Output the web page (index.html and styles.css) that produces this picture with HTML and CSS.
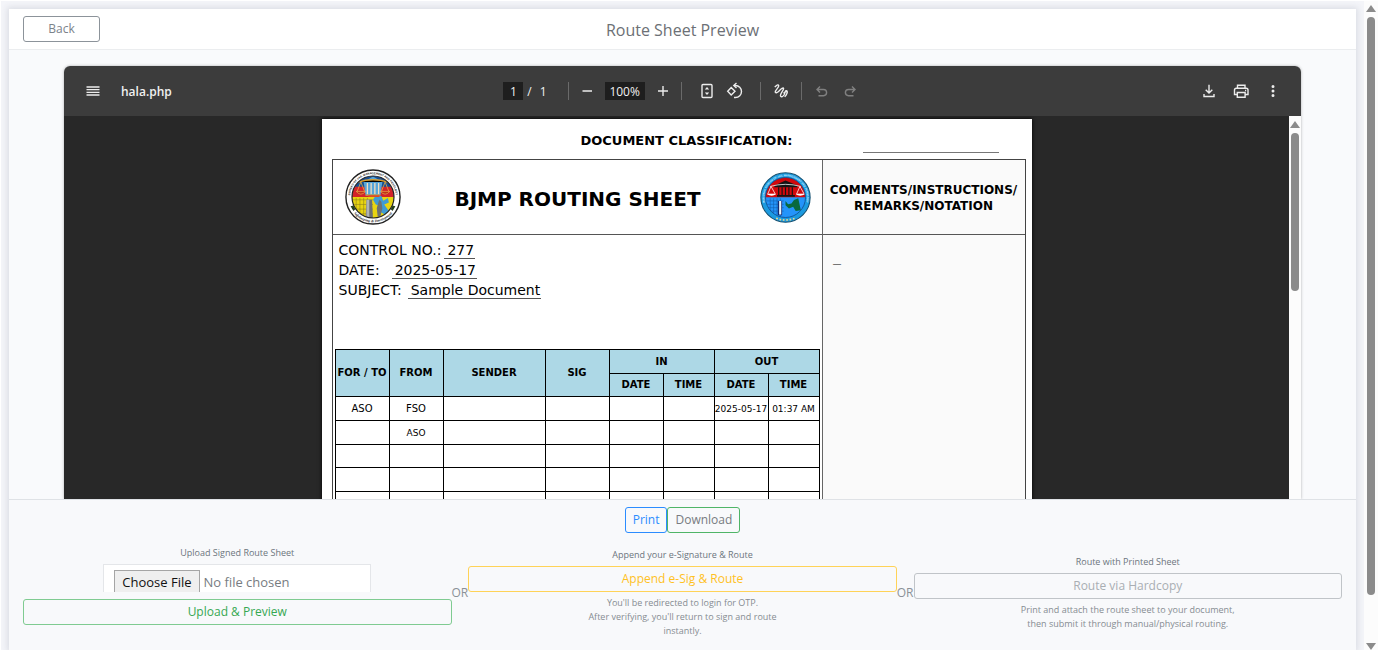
FILE: index.html
```html
<!DOCTYPE html>
<html lang="en">
<head>
<meta charset="utf-8">
<title>Route Sheet Preview</title>
<link rel="stylesheet" href="styles.css">
</head>
<body>
<div class="page">
  <main class="card">
    <header class="card-header">
      <button class="btn btn-secondary btn-back" type="button">Back</button>
      <h1 class="card-title">Route Sheet Preview</h1>
    </header>

    <section class="viewer" aria-label="Document">
      <div class="pdf">
        <div class="toolbar">
          <div class="toolbar-start">
            <button class="tool" type="button" aria-label="Menu"><svg viewBox="0 0 20 20"><path d="M3.500 6h13M3.500 8.700h13M3.500 11.300h13M3.500 14h13" stroke-width="1.300"/></svg></button>
            <span class="file-name">hala.php</span>
          </div>
          <div class="toolbar-center">
            <div class="group group-page">
              <input class="field field-page" type="text" value="1" aria-label="Page">
              <span>/</span><span class="page-count">1</span>
            </div>
            <div class="group group-zoom">
              <button class="tool" type="button" aria-label="Zoom out"><svg viewBox="0 0 20 20"><path d="M5.500 10h9.500"/></svg></button>
              <input class="field field-zoom" type="text" value="100%" aria-label="Zoom level">
              <button class="tool" type="button" aria-label="Zoom in"><svg viewBox="0 0 20 20"><path d="M5 10h10M10 5v10"/></svg></button>
            </div>
            <div class="group group-fit">
              <button class="tool" type="button" aria-label="Fit to page"><svg viewBox="0 0 20 20"><rect x="5" y="3.500" width="10" height="13" rx="1"/><path class="solid" d="M7.800 8.500h4.400L10 6zM7.800 11.500h4.400L10 14z"/></svg></button>
              <button class="tool" type="button" aria-label="Rotate"><svg viewBox="0 0 20 20"><path d="M6.200 6.500 10 10.300 6.200 14 2.700 10.300zM9.300 4.500h1.200a6 6 0 0 1 0 12H9"/><path d="m11.500 2-2.700 2.500L11.500 7"/></svg></button>
            </div>
            <div class="group group-draw">
              <button class="tool" type="button" aria-label="Draw"><svg viewBox="0 0 20 20"><path d="M3.800 6.200C5.300 4 7.300 3.200 7.700 4.600 8.200 6.400 4 9.200 4.300 11c.3 1.500 2.200.6 4-1.300 1.900-2 4-3.400 4.300-2.200.3 1.600-3.800 5.200-3.200 7.400.4 1.500 2.400 1 3.600-.9 1-1.700.9-3.800 2-4.300 1-.4 1.700.8 1 2.600-.5 1.300-1.600 2.800-2.300 3.600M12.500 12.300c1.200-1.700 2.400-1.900 4-1.900"/></svg></button>
            </div>
            <div class="group group-history">
              <button class="tool" type="button" aria-label="Undo" disabled><svg viewBox="0 0 20 20"><path d="M8 5.500 5 8.500l3 3M5 8.500h6.500a3.100 3.100 0 0 1 0 6.200H6.500"/></svg></button>
              <button class="tool" type="button" aria-label="Redo" disabled><svg viewBox="0 0 20 20"><path d="m12 5.500 3 3-3 3M15 8.500H8.500a3.100 3.100 0 0 0 0 6.200h5"/></svg></button>
            </div>
          </div>
          <div class="toolbar-end">
            <button class="tool" type="button" aria-label="Download file"><svg viewBox="0 0 20 20"><path d="M10 3.800v8M6.700 8.700 10 12l3.300-3.300M5 13v2.500h10V13"/></svg></button>
            <button class="tool" type="button" aria-label="Print file"><svg viewBox="0 0 20 20"><path d="M6.500 7V4.200h7.500V7M6 13.500H3.500V9q0-1.800 1.800-1.800h9.900Q17 7.200 17 9v4.500h-2.800M6.300 11.500h7.800v4.700H6.300z"/><path d="M14 9.500h1.200"/></svg></button>
            <button class="tool" type="button" aria-label="More"><svg viewBox="0 0 20 20"><path class="dot" d="M10 5.500h0M10 10h0M10 14.500h0"/></svg></button>
          </div>
        </div>

        <div class="pdf-body">
          <div class="pdf-canvas">
            <article class="sheet">
              <div class="classification"><span class="classification-label">DOCUMENT CLASSIFICATION:</span><span class="classification-line"></span></div>
              <div class="frame">
                <div class="masthead">
                  <svg class="seal" viewBox="0 0 60 60" aria-hidden="true">
                    <defs>
                      <clipPath id="c1"><circle cx="30" cy="30" r="22.500"/></clipPath>
                      <path id="arc1" d="M8.100 41A24.500 24.500 0 1 1 51.900 41"/>
                      <path id="arc2" d="M7.500 45A27 27 0 0 0 52.500 45"/>
                    </defs>
                    <circle cx="30" cy="30" r="29" fill="#fff" stroke="#222" stroke-width="1.500"/>
                    <g clip-path="url(#c1)">
                      <path fill="#174f94" d="M0 0h60v20H0z"/><path fill="#d2232a" d="M0 19h60v12H0z"/><path fill="#e8d411" d="M0 30h60v30H0z"/>
                      <path fill="#55a4d8" d="m20 14 10-6 10 6-2 14H22z"/>
                      <path stroke="#8a7d1c" stroke-width=".6" d="M8 33h22M8 38h22M8 43h22M8 48h22M12 31v20M16 31v20M20 31v20M24 31v20"/>
                      <path fill="#409bd3" d="m33 28 6 1 2 5 5-3 1 5-5 2 5 7-4 4-5-3 1-6-6-2-3-5z"/>
                      <path fill="#6d7072" d="M23 33h6l1 21h-8zM36 35l1-2 2 2 1 7-2 9h-3l-1-9z"/>
                      <path fill="#aeb3b5" d="M23 33h3v20h-3z"/>
                      <path stroke="#f1dfc1" stroke-width="1.400" d="M24 15v12M28 15v12M32 15v12M36 15v12"/>
                      <path stroke="#d79c2d" stroke-width="1.400" d="M14 14q16-5 32 0M22 28h16"/>
                      <path fill="none" stroke="#f3b23c" stroke-width=".8" d="m17 14-4 10m4-10 4 10m22-10-4 10m4-10 4 10"/>
                      <path fill="#be3217" stroke="#f5ca54" stroke-width=".6" d="M12 24h10q-5 6-10 0M38 24h10q-5 6-10 0"/>
                      <path stroke="#e14b22" stroke-width="1.800" d="M25 29h12"/>
                    </g>
                    <circle cx="30" cy="30" r="22.500" fill="none" stroke="#222" stroke-width="1.300"/>
                    <text class="seal-text"><textPath href="#arc1" startOffset="50%" text-anchor="middle">BUREAU OF JAIL MANAGEMENT AND PENOLOGY</textPath></text>
                    <text class="seal-text seal-script"><textPath href="#arc2" startOffset="50%" text-anchor="middle">Safekeeping &amp; Development</textPath></text>
                    <path fill="#243e1c" d="m6 40 3-1 2 4-2 2zM54 40l-3-1-2 4 2 2z"/>
                  </svg>
                  <h2 class="sheet-title">BJMP ROUTING SHEET</h2>
                  <svg class="seal seal-small" viewBox="0 0 60 60" aria-hidden="true">
                    <defs>
                      <clipPath id="c2"><circle cx="30" cy="30" r="23.500"/></clipPath>
                      <path id="arc3" d="M10 45A25 25 0 1 1 50 45"/>
                    </defs>
                    <circle cx="30" cy="30" r="29" fill="#1b9ae0" stroke="#17506f" stroke-width="1.200"/>
                    <g clip-path="url(#c2)">
                      <path fill="#d2080c" d="M0 0h60v30H0z"/><path fill="#2494fa" d="M0 30h60v30H0z"/>
                      <path stroke="#1261ae" stroke-width=".7" d="M8 34h20M8 38h20M8 42h20M8 46h20M12 31v22M16 31v22M20 31v22M24 31v22"/>
                      <path fill="#172a70" d="M21 34h5v17h-5z"/><path fill="#eaf7ff" d="M22.500 34h2.500v16h-2.500z"/>
                      <path fill="#08693e" d="m30 34 3 4 4-1 3-4 5-2 3 14-6 1-3-5-5 2-4-4z"/>
                      <path fill="#151515" d="m17 16 13-6 14 6v2H17zM20 27h21v2H20z"/>
                      <path stroke="#141414" stroke-width="1.400" d="M22 18v9M26 18v9M30 18v9M34 18v9M38 18v9"/>
                      <path fill="none" stroke="#fff" stroke-width=".9" d="M12 17q18-5 36 0M13 17 9 26h9zM47 17l-4 9h9z"/>
                      <path fill="#fff" d="M8 26h11q-5 4-11 0M42 26h11q-6 4-11 0"/>
                    </g>
                    <circle cx="30" cy="30" r="23.500" fill="none" stroke="#124f90"/>
                    <text class="seal-text seal-light"><textPath href="#arc3" startOffset="50%" text-anchor="middle">REGIONAL BUREAU OF JAIL MANAGEMENT AND PENOLOGY</textPath></text>
                    <path stroke="#ecd68b" stroke-width="2" stroke-dasharray="2 2" fill="none" d="M19 54.500q11 4 22 0"/>
                  </svg>
                </div>
                <div class="comments-head">COMMENTS/INSTRUCTIONS/<br>REMARKS/NOTATION</div>

                <div class="routing">
                  <dl class="meta">
                    <div class="meta-row"><dt>CONTROL NO.:</dt><dd>277</dd></div>
                    <div class="meta-row meta-date"><dt>DATE:</dt><dd>2025-05-17</dd></div>
                    <div class="meta-row meta-subject"><dt>SUBJECT:</dt><dd>Sample Document</dd></div>
                  </dl>
                  <table class="log">
                    <colgroup><col class="w-date"><col class="w-date"><col class="w-sender"><col class="w-sig"><col class="w-date"><col class="w-time"><col class="w-date"><col class="w-time"></colgroup>
                    <thead>
                      <tr><th rowspan="2">FOR / TO</th><th rowspan="2">FROM</th><th rowspan="2">SENDER</th><th rowspan="2">SIG</th><th colspan="2">IN</th><th colspan="2">OUT</th></tr>
                      <tr><th>DATE</th><th>TIME</th><th>DATE</th><th>TIME</th></tr>
                    </thead>
                    <tbody>
                      <tr><td>ASO</td><td>FSO</td><td></td><td></td><td></td><td></td><td class="small">2025-05-17</td><td class="small">01:37 AM</td></tr>
                      <tr><td></td><td class="small">ASO</td><td></td><td></td><td></td><td></td><td></td><td></td></tr>
                      <tr><td></td><td></td><td></td><td></td><td></td><td></td><td></td><td></td></tr>
                      <tr><td></td><td></td><td></td><td></td><td></td><td></td><td></td><td></td></tr>
                      <tr><td></td><td></td><td></td><td></td><td></td><td></td><td></td><td></td></tr>
                    </tbody>
                  </table>
                </div>
                <div class="comments">—</div>
              </div>
            </article>
          </div>
          <div class="scrollbar scrollbar-inner" aria-hidden="true">
            <span class="arrow-up"></span><span class="thumb"></span>
          </div>
        </div>
      </div>
    </section>

    <footer class="actions">
      <div class="file-actions">
        <button class="btn btn-primary" type="button">Print</button>
        <button class="btn btn-download" type="button">Download</button>
      </div>
      <div class="options">
        <form class="option option-upload">
          <label class="option-label" for="signed-file">Upload Signed Route Sheet</label>
          <input class="file-input" id="signed-file" type="file">
          <button class="btn btn-success" type="button">Upload &amp; Preview</button>
        </form>
        <span class="or">OR</span>
        <div class="option">
          <span class="option-label">Append your e-Signature &amp; Route</span>
          <button class="btn btn-warning" type="button">Append e-Sig &amp; Route</button>
          <p class="hint">You'll be redirected to login for OTP.<br>After verifying, you'll return to sign and route<br>instantly.</p>
        </div>
        <span class="or">OR</span>
        <div class="option">
          <span class="option-label">Route with Printed Sheet</span>
          <button class="btn btn-secondary" type="button" disabled>Route via Hardcopy</button>
          <p class="hint">Print and attach the route sheet to your document,<br>then submit it through manual/physical routing.</p>
        </div>
      </div>
    </footer>
  </main>
  <div class="scrollbar scrollbar-page" aria-hidden="true">
    <span class="arrow-up"></span><span class="thumb"></span><span class="arrow-down"></span>
  </div>
</div>
</body>
</html>
```
FILE: styles.css
```css
* { box-sizing: border-box; }

body {
  margin: 0;
  background: #fff;
  color: #6c757d;
  font-family: "Open Sans", "Noto Sans", sans-serif;
  font-size: 12px;
}

button, input { font: inherit; }
h1, h2, p, dl, dd { margin: 0; }

.page {
  display: flex;
  height: 100vh;
  padding: 1px 0 1px 1px;
}

.card {
  flex: 1;
  min-width: 0;
  display: flex;
  flex-direction: column;
  margin: 8px 8px 0;
  background: #f9fafc;
  box-shadow: 0 0 6px 2px rgba(60, 65, 90, 0.12), 0 0 0 8px #f4f5f9;
  clip-path: inset(-8px -8px 0 -8px);
}

/* Header */
.card-header {
  display: grid;
  grid-template-columns: 1fr auto 1fr;
  align-items: center;
  height: 41px;
  padding: 0 14px;
  background: #fff;
  border-bottom: 1px solid #ebedef;
}
.card-title { font-size: 16px; font-weight: 400; line-height: 24px; padding-top: 2px; color: #6c7075; }
.btn-back { width: 77px; }

/* Buttons */
.btn {
  height: 26px;
  padding: 0 7px;
  border: 1px solid;
  border-radius: 3px;
  background: transparent;
  line-height: 18px;
}
.btn-secondary { color: #7b838a; border-color: #8c939a; }
.btn-secondary:disabled { color: #a9aeb3; border-color: #c0c4c8; }
.btn-primary { color: #2b8cff; border-color: #2b8cff; }
.btn-download { color: #777b80; border-color: #4fb567; }
.btn-success { color: #36a852; border-color: #7fcb91; }
.btn-warning { color: #ffc11f; border-color: #ffd358; }

/* Viewer */
.viewer {
  flex: 1;
  min-height: 0;
  padding: 16px 55px 0;
}
.pdf {
  display: flex;
  flex-direction: column;
  height: 100%;
  overflow: hidden;
  border-radius: 6px 6px 0 0;
  box-shadow: 0 0 3px rgba(0, 0, 0, 0.3);
}
.toolbar {
  flex: none;
  display: grid;
  grid-template-columns: 1fr auto 1fr;
  align-items: center;
  height: 50px;
  padding: 0 18px 0 19px;
  background: #3c3c3c;
  color: #f1f1f1;
}
.toolbar-start, .toolbar-center, .toolbar-end { display: flex; align-items: center; }
.toolbar-start { gap: 18px; }
.toolbar-end { justify-content: flex-end; gap: 12px; }
.file-name { font-weight: 600; }
.tool {
  width: 20px;
  height: 20px;
  padding: 0;
  border: 0;
  background: none;
  color: #ececec;
}
.tool:disabled { color: #808080; }
.tool svg {
  display: block;
  width: 20px;
  height: 20px;
  fill: none;
  stroke: currentColor;
  stroke-width: 1.4;
}
.tool .solid { fill: currentColor; stroke: none; }
.tool .dot { stroke-width: 3; stroke-linecap: round; }
.group {
  display: flex;
  align-items: center;
  gap: 8px;
  height: 18px;
  padding: 0 10px;
  border-left: 1px solid #6a6a6a;
}
.group-page { gap: 4px; padding: 0 21px 0 0; border-left: 0; }
.page-count { margin-left: 4px; }
.group-zoom { padding: 0 8px; }
.group-fit { padding: 0 15px; }
.group-history { padding-right: 3px; }
.field {
  height: 18px;
  padding: 0;
  border: 0;
  background: #1e1e1e;
  color: #f1f1f1;
  text-align: center;
}
.field-page { width: 20px; }
.field-zoom { width: 40px; }

.pdf-body { flex: 1; min-height: 0; display: flex; background: #282828; }
.pdf-canvas {
  flex: 1;
  display: flex;
  justify-content: center;
  align-items: flex-start;
  overflow: hidden;
  padding-top: 3px;
}

/* Routing sheet */
.sheet {
  flex: none;
  width: 710px;
  min-height: 500px;
  padding: 0 6px 0 10px;
  background: #fff;
  box-shadow: 0 0 4px #000;
  color: #000;
  font-family: "DejaVu Sans", sans-serif;
}
.classification {
  display: flex;
  justify-content: flex-end;
  height: 40px;
  padding: 0 27px 6px 0;
  gap: 70px;
}
.classification-label { font-size: 13px; font-weight: 700; line-height: 44px; }
.classification-line { width: 136px; border-bottom: 1px solid #777; }
.frame {
  display: grid;
  grid-template-columns: minmax(0, 1fr) 203px;
  grid-template-rows: 75px 400px;
  border: 1px solid #444;
}
.masthead {
  display: flex;
  align-items: center;
  justify-content: space-between;
  padding: 0 10px 0 12px;
  border-bottom: 1px solid #555;
}
.seal { width: 56px; height: 56px; }
.seal-small { width: 51px; height: 51px; }
.seal-text { font-family: "Liberation Sans", sans-serif; font-size: 3px; font-weight: 700; fill: #222; }
.seal-script { font-family: "Liberation Serif", serif; font-style: italic; font-size: 4px; }
.seal-light { fill: #d9f0ff; }
.sheet-title { padding: 4px 6px 0 0; font-size: 20px; }
.comments-head {
  padding-top: 22px;
  border-left: 1px solid #666;
  border-bottom: 1px solid #555;
  background: #fafafa;
  font-size: 12px;
  font-weight: 700;
  line-height: 16px;
  text-align: center;
}
.comments {
  padding: 24px 10px;
  border-left: 1px solid #666;
  background: #fafafa;
  font-size: 9px;
}
.routing { padding: 5px 2px 0; }
.meta { height: 109px; padding-left: 4px; font-size: 14px; line-height: 20px; }
.meta-row { display: flex; gap: 3px; height: 20px; }
.meta dd { height: 19px; padding: 0 1px 0 3px; border-bottom: 1px solid #555; }
.meta-date { gap: 12px; }
.meta-subject { gap: 6px; }

.log {
  width: 485px;
  table-layout: fixed;
  border-collapse: collapse;
  font-size: 10px;
  line-height: 14px;
  text-align: center;
}
.log tr { height: 24px; }
.log thead tr:last-child, .log tbody tr:nth-child(3n) { height: 23px; }
.log th, .log td { padding: 0; border: 1px solid #000; white-space: nowrap; }
.log th { background: #add8e6; }
.log .small { font-size: 9px; }
.w-date { width: 54px; }
.w-sender { width: 102px; }
.w-sig { width: 64px; }
.w-time { width: 51px; }

/* Scrollbars */
.scrollbar {
  flex: none;
  display: flex;
  flex-direction: column;
  align-items: center;
  background: #fcfcfc;
}
.scrollbar-inner { width: 12px; padding-top: 5px; }
.scrollbar-page { width: 14px; padding: 4px 0 0; }
.thumb { width: 8px; margin-top: 5px; border-radius: 4px; background: #8b8b8b; }
.scrollbar-inner .thumb { height: 158px; }
.scrollbar-page .thumb { flex: 1; margin-bottom: 48px; }
.arrow-up, .arrow-down { width: 10px; height: 7px; background: #8b8b8b; }
.arrow-up { clip-path: polygon(50% 0, 100% 100%, 0 100%); }
.arrow-down { clip-path: polygon(0 0, 100% 0, 50% 100%); }

/* Actions */
.actions {
  padding: 7px 14px 11px;
  border-top: 1px solid #dfe2e6;
  background: #f8f9fb;
}
.file-actions { display: flex; justify-content: center; }
.options {
  display: flex;
  align-items: center;
  margin-top: 13px;
}
.option {
  flex: 1 1 0;
  display: flex;
  flex-direction: column;
  gap: 4px;
  text-align: center;
}
.option-upload { padding-bottom: 14px; }
.option-label { font-size: 9px; line-height: 14px; }
.file-input {
  align-self: center;
  width: 268px;
  height: 28px;
  margin-bottom: 3px;
  padding: 5px 10px;
  border: 1px solid #e4e6e9;
  border-bottom: 0;
  background: #fff;
  color: #777c81;
  font-size: 13px;
}
.file-input::file-selector-button {
  height: 24px;
  margin-right: 4px;
  padding: 0 7px;
  border: 1px solid #a5a5a5;
  background: #efefef;
  color: #111;
  font: inherit;
}
.or { color: #8b9197; }
.hint { color: #868c92; font-size: 9px; line-height: 14px; }
```
